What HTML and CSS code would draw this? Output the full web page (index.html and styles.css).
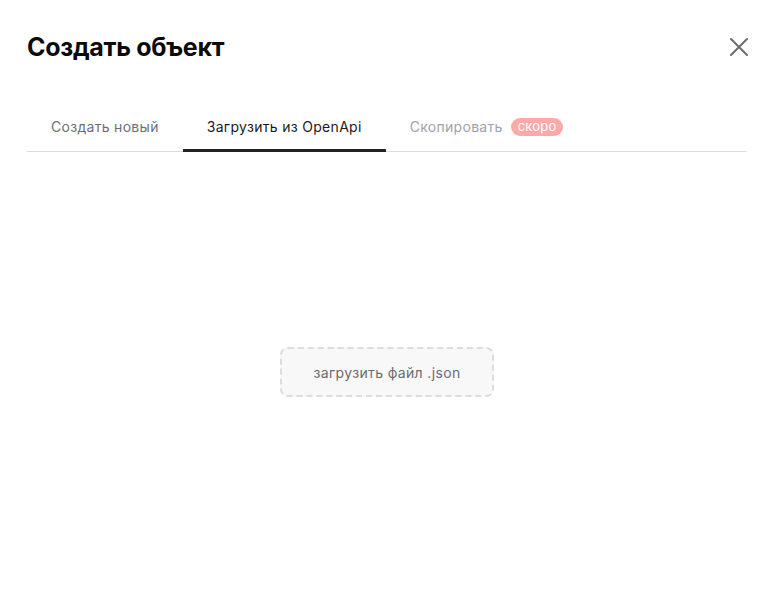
FILE: index.html
```html
<!DOCTYPE html>
<html lang="ru">
<head>
<meta charset="utf-8">
<link rel="stylesheet" href="styles.css">
</head>
<body>
<div class="modal">
  <div class="header">
    <h1 class="title">Создать объект</h1>
    <button class="close" aria-label="Закрыть">
      <svg width="20" height="20" viewBox="0 0 20 20"><path d="M2 2 L18 18 M18 2 L2 18" stroke="#6b6b72" stroke-width="2" stroke-linecap="round" fill="none"/></svg>
    </button>
  </div>
  <div class="tabs">
    <div class="tab">Создать новый</div>
    <div class="tab active">Загрузить из OpenApi</div>
    <div class="tab disabled">Скопировать <span class="badge">скоро</span></div>
  </div>
  <div class="body">
    <div class="upload">загрузить файл .json</div>
  </div>
</div>
</body>
</html>
```
FILE: styles.css
```css
html, body { margin: 0; padding: 0; background: #fff; }
body { font-family: Inter, "Noto Sans", sans-serif; color: #111; }
.modal { padding: 0 31px 0 27px; }
.header { display: flex; align-items: center; justify-content: space-between; height: 94px; }
.title { margin: 0; font-size: 25px; font-weight: 700; letter-spacing: -0.3px; color: #0b0b0b; }
.close { background: none; border: 0; padding: 0; margin-right: -2px; width: 20px; height: 20px; display: flex; cursor: pointer; }
.tabs { display: flex; border-bottom: 1px solid #dcdcdf; height: 58px; box-sizing: border-box; }
.tab { padding: 8px 24px 0; font-size: 14px; letter-spacing: 0.3px; color: #6e6e76; display: flex; align-items: center; gap: 8px; box-sizing: border-box; }
.tab.active { color: #1a1a1e; box-shadow: inset 0 -3px 0 #222226; height: 58px; margin-bottom: -1px; padding-bottom: 1px; }
.tab.disabled { color: #a2a2a8; }
.badge { background: #ffa9a9; color: #fff; font-size: 13px; letter-spacing: 0.2px; border-radius: 10px; padding: 1px 7px 2px; line-height: 15px; }
.body { display: flex; justify-content: center; padding-top: 195px; }
.upload { width: 214px; height: 50px; box-sizing: border-box; border: 2px dashed #dcdcdc; border-radius: 8px; background: #f8f8f8; display: flex; align-items: center; justify-content: center; font-size: 14px; letter-spacing: 0.35px; color: #6b6b70; }
```
